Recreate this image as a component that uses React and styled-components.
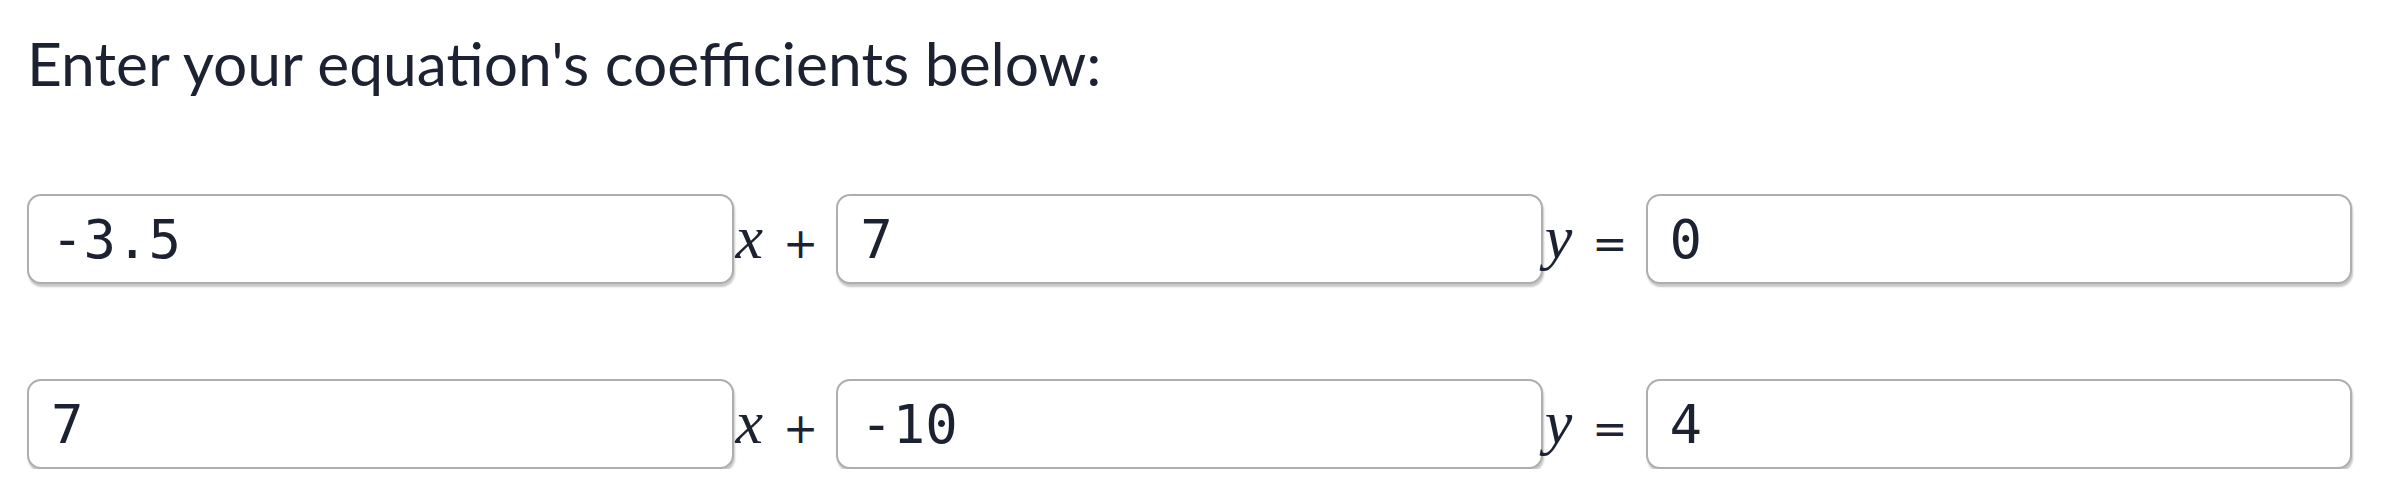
import React from 'react';
import styled, { createGlobalStyle } from 'styled-components';

const GlobalStyle = createGlobalStyle`
  body {
    margin: 0;
    background: #ffffff;
    color: #1d2232;
  }
`

const Page = styled.div`
  display: flex;
  flex-direction: column;
  gap: 95px;
  padding: 26px 42px 0 27px;
`

const Heading = styled.p`
  margin: 0;
  font-family: Lato, "Open Sans", sans-serif;
  font-size: 60.5px;
  line-height: 73px;
  font-weight: 400;
  color: #1d2232;
`

const Row = styled.div`
  display: flex;
  align-items: baseline;
`

const Coef = styled.input`
  flex: 1;
  min-width: 0;
  height: 90px;
  box-sizing: border-box;
  padding: 0 0 0 22px;
  border: 2px solid #aeaeae;
  border-radius: 14px;
  box-shadow: 1px 3px 2px rgba(0, 0, 0, 0.22);
  background: #fff;
  font-family: "DejaVu Sans Mono", "Liberation Mono", monospace;
  font-size: 54px;
  color: #1d2232;
  outline: none;
`

const Label = styled.span`
  display: flex;
  align-items: baseline;
  padding: 0 18px 0 2px;
  color: #1d2232;
`

const Var = styled.i`
  font-family: "Liberation Serif", serif;
  font-style: italic;
  font-size: 62px;
  line-height: 1;
`

const Op = styled.span`
  margin-left: 20px;
  font-family: "DejaVu Sans", sans-serif;
  font-size: 42px;
  line-height: 1;
`

const rows = [
  ['-3.5', '7', '0'],
  ['7', '-10', '4'],
]

const App = () => {
  return (
    <Page>
      <GlobalStyle />
      <Heading>Enter your equation's coefficients below:</Heading>
      {rows.map((r, i) => (
        <Row key={i}>
          <Coef defaultValue={r[0]} />
          <Label><Var>x</Var><Op>+</Op></Label>
          <Coef defaultValue={r[1]} />
          <Label><Var>y</Var><Op>=</Op></Label>
          <Coef defaultValue={r[2]} />
        </Row>
      ))}
    </Page>
  );
};

export default App;
